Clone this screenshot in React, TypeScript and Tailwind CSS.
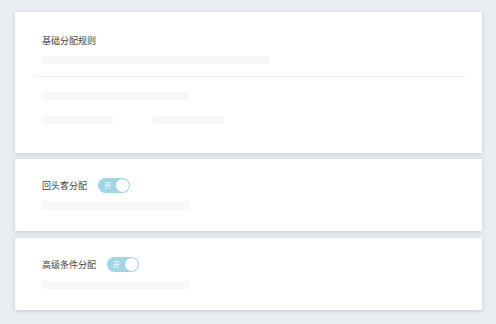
import React from "react";

const font = { fontFamily: '"Noto Sans CJK SC", "Noto Sans", sans-serif' };

function Toggle() {
  return (
    <div className="relative flex h-[15px] w-[32px] items-center rounded-full bg-[#9fd5e5]">
      <span className="ml-[6px] text-[7px] leading-none text-white">开</span>
      <span className="absolute right-[1px] top-[1px] h-[13px] w-[13px] rounded-full bg-white" />
    </div>
  );
}

function Bar({ w }: { w: string }) {
  return <div className={`h-[8px] bg-[#f7f7f7] ${w}`} />;
}

export default function App() {
  return (
    <div
      className="flex h-[324px] w-[496px] flex-col gap-[6px] bg-[#e9eef3] pl-[15px] pr-[14px] pt-[12px]"
      style={font}
    >
      <div className="flex h-[141px] flex-col bg-white pt-[23px] shadow-[0_1px_4px_rgba(120,135,150,0.35)]">
        <div className="px-[27px] text-[9px] leading-[12px] text-[#444]">基础分配规则</div>
        <div className="mt-[9px] px-[27px]">
          <Bar w="w-[227px]" />
        </div>
        <div className="ml-[20px] mr-[14px] mt-[12px] h-[1px] bg-[#f1f1f1]" />
        <div className="mt-[15px] px-[27px]">
          <Bar w="w-[147px]" />
        </div>
        <div className="mt-[16px] flex gap-[40px] px-[27px]">
          <Bar w="w-[71px]" />
          <Bar w="w-[71px]" />
        </div>
      </div>
      <div className="flex h-[72px] flex-col bg-white px-[27px] pt-[19px] shadow-[0_1px_4px_rgba(120,135,150,0.35)]">
        <div className="flex items-center gap-[11px]">
          <span className="text-[9px] leading-[12px] text-[#444]">回头客分配</span>
          <Toggle />
        </div>
        <div className="mt-[8px]">
          <Bar w="w-[147px] h-[9px]" />
        </div>
      </div>
      <div className="mt-[1px] flex h-[72px] flex-col bg-white px-[27px] pt-[19px] shadow-[0_1px_4px_rgba(120,135,150,0.35)]">
        <div className="flex items-center gap-[11px]">
          <span className="text-[9px] leading-[12px] text-[#444]">高级条件分配</span>
          <Toggle />
        </div>
        <div className="mt-[9px]">
          <Bar w="w-[147px]" />
        </div>
      </div>
    </div>
  );
}
